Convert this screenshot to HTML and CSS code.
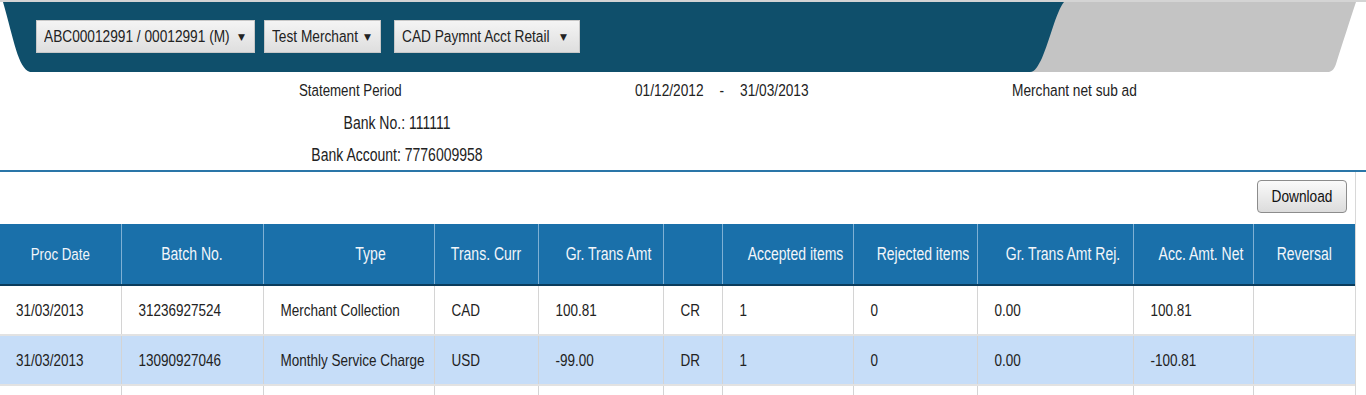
FILE: index.html
```html
<!DOCTYPE html>
<html lang="en">
<head>
    <meta charset="UTF-8">
    <title>Merchant Statement</title>
    <link rel="stylesheet" href="styles.css">
</head>
<body>

    <div class="topbar">
        <svg class="band" viewBox="0 0 1366 74" width="1366" height="74" preserveAspectRatio="none">
            <rect x="0" y="0" width="1366" height="2" fill="#d4d4d4"/>
            <path d="M1040 2 L1356 2 C1350 20 1342 45 1336 64 C1334 70 1331 72 1328 72 L1010 72 Z" fill="#c4c4c4"/>
            <path d="M3 2 L1064 2 C1056 12 1050 40 1042 58 C1038 66 1035 72 1030 72 L30 72 C18 68 14 40 3 2 Z" fill="#0f4f6b"/>
        </svg>
        <div class="selectors">
            <div class="dropdown wide"><span class="t">ABC00012991 / 00012991 (M)</span><span class="arrow">&#9660;</span></div>
            <div class="dropdown"><span class="t">Test Merchant</span><span class="arrow">&#9660;</span></div>
            <div class="dropdown acct"><span class="t">CAD Paymnt Acct Retail</span><span class="arrow">&#9660;</span></div>
        </div>
    </div>

    <div class="statement-info">
        <div class="info-row period">
            <span class="period-label"><span class="t">Statement Period</span></span>
            <span class="period-dates"><span class="t">01/12/2012</span><span class="t dash">-</span><span class="t">31/03/2013</span></span>
            <span class="merchant-name"><span class="t">Merchant net sub ad</span></span>
        </div>
        <div class="info-row centered"><span class="t">Bank No.: 111111</span></div>
        <div class="info-row centered"><span class="t">Bank Account: 7776009958</span></div>
    </div>

    <div class="results">
        <div class="toolbar">
            <button class="btn-download"><span class="t">Download</span></button>
        </div>
        <table class="summary-table">
            <colgroup>
                <col style="width:121px"><col style="width:142px"><col style="width:171px">
                <col style="width:104px"><col style="width:125px"><col style="width:59px">
                <col style="width:131px"><col style="width:124px"><col style="width:156px">
                <col style="width:120px"><col style="width:102px">
            </colgroup>
            <thead>
                <tr>
                    <th><span class="t">Proc Date</span></th>
                    <th><span class="t">Batch No.</span></th>
                    <th class="shift-lg"><span class="t">Type</span></th>
                    <th><span class="t">Trans. Curr</span></th>
                    <th class="shift"><span class="t">Gr. Trans Amt</span></th>
                    <th></th>
                    <th class="shift"><span class="t">Accepted items</span></th>
                    <th class="shift"><span class="t">Rejected items</span></th>
                    <th class="shift"><span class="t">Gr. Trans Amt Rej.</span></th>
                    <th class="shift"><span class="t">Acc. Amt. Net</span></th>
                    <th><span class="t">Reversal</span></th>
                </tr>
            </thead>
            <tbody>
                <tr>
                    <td><span class="t">31/03/2013</span></td>
                    <td><span class="t">31236927524</span></td>
                    <td><span class="t">Merchant Collection</span></td>
                    <td><span class="t">CAD</span></td>
                    <td><span class="t">100.81</span></td>
                    <td><span class="t">CR</span></td>
                    <td><span class="t">1</span></td>
                    <td><span class="t">0</span></td>
                    <td><span class="t">0.00</span></td>
                    <td><span class="t">100.81</span></td>
                    <td></td>
                </tr>
                <tr class="alt">
                    <td><span class="t">31/03/2013</span></td>
                    <td><span class="t">13090927046</span></td>
                    <td><span class="t">Monthly Service Charge</span></td>
                    <td><span class="t">USD</span></td>
                    <td><span class="t">-99.00</span></td>
                    <td><span class="t">DR</span></td>
                    <td><span class="t">1</span></td>
                    <td><span class="t">0</span></td>
                    <td><span class="t">0.00</span></td>
                    <td><span class="t">-100.81</span></td>
                    <td></td>
                </tr>
                <tr class="empty">
                    <td></td><td></td><td></td><td></td><td></td><td></td>
                    <td></td><td></td><td></td><td></td><td></td>
                </tr>
            </tbody>
        </table>
    </div>

</body>
</html>
```

FILE: styles.css
```css
/* Merchant statement */
body { margin: 0; font-family: 'Liberation Sans', Arial, sans-serif; font-size: 13.5px; color: #222; background: #fff; width: 1366px; overflow: hidden; }

/* the old screen renders its text tall and narrow */
.t { display: inline-block; transform: scaleY(1.25); white-space: nowrap; }

.topbar { position: relative; height: 74px; }
.band { position: absolute; left: 0; top: 0; display: block; }
.selectors { position: relative; display: flex; gap: 9px; padding: 20px 0 0 36px; font-size: 13.7px; }
.dropdown { display: flex; align-items: center; justify-content: space-between; height: 31px; padding: 0 9px 0 7px; background: linear-gradient(#f4f4f4, #dedede); border: 1px solid #c8c8c8; color: #222; }
.dropdown.wide { width: 201px; }
.dropdown { width: 99px; }
.dropdown.acct { width: 165px; margin-left: 4px; padding-right: 12px; }
.dropdown .arrow { font-family: 'DejaVu Sans', sans-serif; font-size: 9px; color: #222; }

.statement-info { height: 96px; border-bottom: 2px solid #2a76a8; font-size: 13.7px; }
.info-row { height: 32px; line-height: 32px; }
.info-row:first-child { padding-top: 1px; }
.period { display: flex; }
.period-label { width: 336px; padding-left: 299px; font-size: 13.3px; }
.period-dates { width: 377px; }
.period-dates .dash { margin: 0 16px; }
.info-row.centered { width: 794px; text-align: center; font-size: 14px; }

.results { width: 1355px; border-right: 1px solid #d8d8d8; }
.toolbar { display: flex; justify-content: flex-end; padding: 8px 8px 11px 0; }
.btn-download { height: 33px; width: 90px; font-family: inherit; font-size: 13.7px; color: #111; background: linear-gradient(#fafafa, #dcdcdc); border: 1px solid #8c8c8c; border-radius: 4px; padding: 0; }

.summary-table { width: 1355px; border-collapse: collapse; table-layout: fixed; }
.summary-table th { height: 60px; background: #1a70aa; color: #f2f6fa; font-size: 14px; font-weight: normal; text-align: center; border-left: 1px solid #7fb0d4; border-bottom: 2px solid #0b3c5c; padding: 0; }
.summary-table th:first-child { border-left: none; font-size: 13.3px; }
.summary-table th.shift { padding-left: 16px; }
.summary-table th.shift-lg { padding-left: 44px; }
.summary-table td { height: 48px; padding: 0 0 0 17px; border-left: 1px solid #d4d4d4; border-bottom: 2px solid #e2e2e2; white-space: nowrap; }
.summary-table td:first-child { border-left: none; padding-left: 16px; }
.summary-table tr.alt td { background: #c6ddf8; }
.summary-table tr.empty td { height: 10px; border-bottom: none; }
```
